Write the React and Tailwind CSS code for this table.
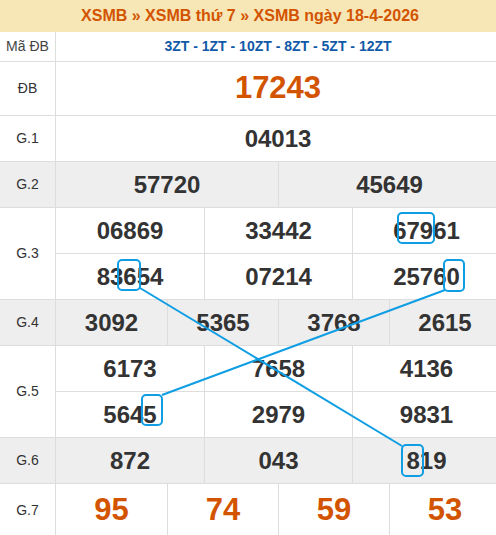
const rows = [
  { label: 'ĐB', h: 'h-[54px]', cols: 1, nums: ['17243'], big: true },
  { label: 'G.1', h: 'h-[46px]', cols: 1, nums: ['04013'] },
  { label: 'G.2', h: 'h-[46px]', cols: 2, nums: ['57720', '45649'], gray: true },
  { label: 'G.3', h: 'h-[46px]', cols: 3, nums: ['06869', '33442', '67961', '83654', '07214', '25760'] },
  { label: 'G.4', h: 'h-[46px]', cols: 4, nums: ['3092', '5365', '3768', '2615'], gray: true },
  { label: 'G.5', h: 'h-[46px]', cols: 3, nums: ['6173', '7658', '4136', '5645', '2979', '9831'] },
  { label: 'G.6', h: 'h-[46px]', cols: 3, nums: ['872', '043', '819'], gray: true },
  { label: 'G.7', h: 'h-[52px]', cols: 4, nums: ['95', '74', '59', '53'], big: true, last: true },
]

const gridCols = {
  1: 'grid-cols-1',
  2: 'grid-cols-2',
  3: 'grid-cols-3',
  4: 'grid-cols-4',
}

function Cell({ value, big, first }) {
  return (
    <div
      className={`flex items-center justify-center font-bold ${
        first ? '' : 'border-l border-[#dddddd]'
      } ${big ? 'text-[31px] text-[#d35400]' : 'text-[24px] text-[#333333]'}`}
    >
      {value}
    </div>
  )
}

function PrizeRow({ row }) {
  // split numbers into sub-rows of `cols`
  const lines = []
  for (let i = 0; i < row.nums.length; i += row.cols) lines.push(row.nums.slice(i, i + row.cols))

  return (
    <div className={`flex ${row.gray ? 'bg-[#eeeeee]' : 'bg-white'}`}>
      <div
        className={`w-[56px] shrink-0 flex items-center justify-center border-r border-[#dddddd] text-[14px] text-[#333333] ${
          row.last ? '' : 'border-b'
        }`}
      >
        {row.label}
      </div>
      <div className="flex-1 flex flex-col">
        {lines.map((line, i) => (
          <div
            key={i}
            className={`grid ${gridCols[row.cols]} ${row.h} ${row.last ? '' : 'border-b border-[#dddddd]'}`}
          >
            {line.map((n, j) => (
              <Cell key={j} value={n} big={row.big} first={j === 0} />
            ))}
          </div>
        ))}
      </div>
    </div>
  )
}

function Marks() {
  const c = '#0f9ee3'
  return (
    <svg className="absolute left-0 top-0 pointer-events-none" width="496" height="535" viewBox="0 0 496 535" fill="none">
      <line x1="140" y1="288" x2="402" y2="446" stroke={c} strokeWidth="2" />
      <line x1="445" y1="290" x2="162" y2="395" stroke={c} strokeWidth="2" />
      <rect x="398" y="213" width="36" height="30" rx="4" stroke={c} strokeWidth="2" />
      <rect x="444" y="260" width="20" height="31" rx="4" stroke={c} strokeWidth="2" />
      <rect x="118" y="260" width="22" height="30" rx="4" stroke={c} strokeWidth="2" />
      <rect x="142" y="395" width="20" height="30" rx="4" stroke={c} strokeWidth="2" />
      <rect x="402" y="445" width="21" height="31" rx="4" stroke={c} strokeWidth="2" />
    </svg>
  )
}

export default function App() {
  return (
    <div className="relative w-[496px] h-[535px] overflow-hidden bg-white font-['Liberation_Sans',Arial,sans-serif]">
      <div className="w-[500px]">
        {/* Title bar */}
        <div className="h-[32px] flex items-center justify-center bg-[#f7e6b6] text-[16px] font-bold text-[#d35400]">
          XSMB » XSMB thứ 7 » XSMB ngày 18-4-2026
        </div>

        {/* Special code */}
        <div className="flex h-[30px] border-b border-[#dddddd]">
          <div className="w-[56px] shrink-0 flex items-center justify-center border-r border-[#dddddd] text-[14px] text-[#444444]">
            Mã ĐB
          </div>
          <div className="flex-1 flex items-center justify-center text-[14px] font-bold text-[#1059a8]">
            3ZT - 1ZT - 10ZT - 8ZT - 5ZT - 12ZT
          </div>
        </div>

        {rows.map((r) => (
          <PrizeRow key={r.label} row={r} />
        ))}
      </div>
      <Marks />
    </div>
  )
}
